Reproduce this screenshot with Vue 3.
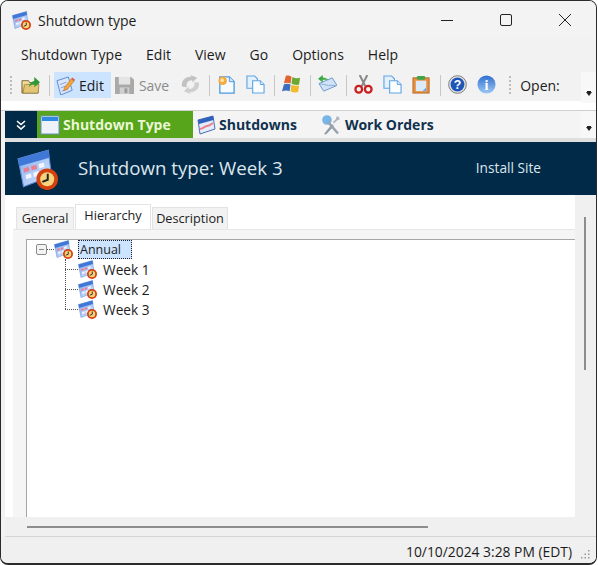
<template>
  <div class="window">
    <svg class="defs" width="0" height="0">
      <defs>
        <linearGradient id="calFill" x1="0" y1="0" x2="1" y2="1">
          <stop offset="0" stop-color="#7fa9ec" />
          <stop offset="1" stop-color="#dbe8ff" />
        </linearGradient>
        <linearGradient id="orb" x1="0" y1="0" x2="0" y2="1">
          <stop offset="0" stop-color="#2f6fd0" />
          <stop offset="1" stop-color="#9cc8f4" />
        </linearGradient>
        <linearGradient id="folderFill" x1="0" y1="0" x2="0" y2="1">
          <stop offset="0" stop-color="#f7e6a8" />
          <stop offset="1" stop-color="#c9a04c" />
        </linearGradient>
        <symbol id="shutdown" viewBox="0 0 38 38">
          <path d="M1 9 29 1l3 24L6 35z" fill="url(#calFill)" stroke="#5f8ad0" />
          <path d="M1 9 29 1l1 7L2 16z" fill="#3f78d6" />
          <path d="M6 18l5-1.500.6 4-5 1.500zM13 16l5-1.500.6 4-5 1.500z" fill="#ea7f92" />
          <path d="M20 14l5-1.500.6 4-5 1.500zM8 24l5-1.500.6 4-5 1.500zM15 22l5-1.500.6 4-5 1.500z" fill="#f1f6ff" />
          <circle cx="28" cy="28" r="10" fill="#d4410f" />
          <circle cx="28" cy="28" r="6.500" fill="#f5d27c" />
          <path d="M28.500 23v5.500l-5 2" fill="none" stroke="#222" stroke-width="1.800" />
        </symbol>
        <symbol id="folder" viewBox="0 0 20 20">
          <path d="M1 6h7l1 2h9v11H1z" fill="url(#folderFill)" stroke="#7b6430" />
          <path d="M2 19 4 10h15l-1 9z" fill="#e3c573" stroke="#8c7236" stroke-width=".6" />
          <path d="M8 13c1-4 3-6 6-7V2l6 5.500-6 5.500V9.500c-2 0-4 1.500-6 3.500z" fill="#2c9a35" />
        </symbol>
        <symbol id="edit" viewBox="0 0 20 20">
          <path d="M1 5 13 1l4 14-12 5z" fill="#dbe6fa" stroke="#5e87c8" />
          <path d="M4 9l7-2.500M5 12.500l7-2.500M6 16l7-2.500" stroke="#7fa2dc" fill="none" />
          <path d="M9 12 16 3l3 2.500-7 8.500-4 1.500z" fill="#f0a63a" stroke="#b9722a" stroke-width=".6" />
          <path d="M16 3l1.200-1.500 3 2.500L19 5.500z" fill="#e2574a" />
        </symbol>
        <symbol id="save" viewBox="0 0 20 20">
          <path d="M0 1h17l3 3v15H0z" fill="#a9a9a9" />
          <rect x="4" y="1" width="12" height="8" fill="#e4e4e4" />
          <rect x="5" y="12" width="10" height="7" fill="#cfcfcf" />
          <rect x="10" y="13" width="3" height="5" fill="#9a9a9a" />
        </symbol>
        <symbol id="refresh" viewBox="0 0 20 20">
          <path d="M1 12C0 6 5 1 11 2L10 0l7 3-5 5V5.500C8 5 5 8 6 13z" fill="#c2c2c2" />
          <path d="M19 8c1 6-4 11-10 10l1 2-7-3 5-5v2.500c4 .5 7-2.500 6-7z" fill="#cfcfcf" />
        </symbol>
        <symbol id="newdoc" viewBox="0 0 20 20">
          <path d="M3 2h10l5 5v12H3z" fill="#f6fbff" stroke="#4b9be0" stroke-width="1.400" />
          <path d="M13 2v5h5" fill="#d3e8fb" stroke="#4b9be0" />
          <circle cx="6" cy="6" r="4.500" fill="#f6a93c" />
          <circle cx="5.500" cy="5.500" r="2" fill="#ffe3a6" />
        </symbol>
        <symbol id="copy" viewBox="0 0 20 20">
          <path d="M1 1h8l3 3v10H1z" fill="#e4f1fd" stroke="#5ea5e4" stroke-width="1.200" />
          <path d="M7 6h8l4 4v9H7z" fill="#fbfdff" stroke="#5ea5e4" stroke-width="1.200" />
          <path d="M15 6v4h4" fill="#d3e8fb" stroke="#5ea5e4" />
        </symbol>
        <symbol id="flag" viewBox="0 0 20 20">
          <path d="M4 1C6 0 9 1 10 2L9 9C7 8 4 8 2 9z" fill="#e3622e" />
          <path d="M11 2c2 1 5 2 8 1l-1 7c-3 1-6 0-8-1z" fill="#69a92f" />
          <path d="M2 10c2-1 5-1 7 0l-1 7c-2-1-5-1-8 0z" fill="#3a6fc0" />
          <path d="M10 10c2 1 5 2 8 1l-1 7c-3 1-6 0-8-1z" fill="#efbb2d" />
        </symbol>
        <symbol id="mail" viewBox="0 0 20 20">
          <path d="M1 9 15 3l5 8-14 6z" fill="#cfe2f7" stroke="#6f97c6" />
          <path d="M1 9l10 2 9 0" fill="none" stroke="#8aaed6" />
          <path d="M0 4l5-4v2.500c2 0 5 1 6 3-2-1-4-.5-6-.5v3z" fill="#39a845" />
        </symbol>
        <symbol id="scissors" viewBox="0 0 20 20">
          <path d="M6 0l6 12M14 0 8 12" stroke="#8a8a8a" stroke-width="2.200" fill="none" />
          <circle cx="5" cy="15" r="3.500" fill="none" stroke="#cb1f1f" stroke-width="2.400" />
          <circle cx="15" cy="15" r="3.500" fill="none" stroke="#cb1f1f" stroke-width="2.400" />
        </symbol>
        <symbol id="paste" viewBox="0 0 20 20">
          <rect x="1" y="3" width="17" height="16" fill="#e98f3c" stroke="#b86a2a" />
          <rect x="4" y="6" width="11" height="11" fill="#dcebfb" />
          <path d="M11 17h4v-4z" fill="#6fa9e6" />
          <rect x="5" y="1" width="9" height="4" rx="1.500" fill="#3fa548" />
        </symbol>
        <symbol id="helpOrb" viewBox="0 0 20 20">
          <circle cx="10" cy="10" r="9.300" fill="#e4e4e4" stroke="#777" />
          <circle cx="10" cy="10" r="7.300" fill="#1d55b8" />
          <text x="10" y="14.700" text-anchor="middle" font-family="Liberation Sans" font-weight="700" font-size="13" fill="#fff">?</text>
        </symbol>
        <symbol id="infoOrb" viewBox="0 0 20 20">
          <circle cx="10" cy="10" r="9.500" fill="url(#orb)" />
          <text x="10" y="15.500" text-anchor="middle" font-family="Liberation Serif" font-weight="700" font-size="15" fill="#fff">i</text>
        </symbol>
        <symbol id="pane" viewBox="0 0 20 20">
          <rect x="1" y="1" width="18" height="18" fill="#eef3fb" stroke="#6d90b8" />
          <rect x="2" y="2" width="16" height="4" fill="#2f8ae0" />
        </symbol>
        <symbol id="shutdowns" viewBox="0 0 20 20">
          <path d="M2 5 17 1l2 13-15 5z" fill="#e3ecfb" stroke="#4a6fb5" />
          <path d="M2 5 17 1l.6 4L3 9z" fill="#2f60bd" />
          <path d="M4 14c4-1 5-3 7-3s3-1 6-3" fill="none" stroke="#ef7f89" stroke-width="2" />
        </symbol>
        <symbol id="tools" viewBox="0 0 20 20">
          <path d="M3 19 11 9l2 2-8 8.500z" fill="#8f9aa5" />
          <circle cx="6" cy="5" r="4.800" fill="#79b4e6" />
          <path d="M7 7l10 11.500" stroke="#9aa3ab" stroke-width="2.600" />
          <path d="M12 7l3-3 .5-2.500c2-.5 3.500 1 3 3l-2.500 1-3 3z" fill="#aeb5bc" />
        </symbol>
      </defs>
    </svg>

    <header class="titlebar">
      <svg class="title-icon"><use href="#shutdown" /></svg>
      <span class="title-text">Shutdown type</span>
      <div class="win-controls">
        <span class="ctl-min"></span>
        <span class="ctl-max"></span>
        <svg class="ctl-close" viewBox="0 0 12 12"><path d="M0 0l12 12M12 0 0 12" stroke="#222" stroke-width="1" /></svg>
      </div>
    </header>

    <nav class="menubar">
      <span v-for="m in menus" :key="m">{{ m }}</span>
    </nav>

    <div class="toolbar">
      <span class="grip"></span>
      <svg class="tb-icon folder"><use href="#folder" /></svg>
      <span class="sep"></span>
      <button class="tb-btn active"><svg class="tb-icon"><use href="#edit" /></svg>Edit</button>
      <button class="tb-btn muted"><svg class="tb-icon"><use href="#save" /></svg>Save</button>
      <svg class="tb-icon refresh"><use href="#refresh" /></svg>
      <span class="sep"></span>
      <div class="tb-group">
        <svg class="tb-icon"><use href="#newdoc" /></svg>
        <svg class="tb-icon"><use href="#copy" /></svg>
      </div>
      <span class="sep"></span>
      <svg class="tb-icon"><use href="#flag" /></svg>
      <span class="sep"></span>
      <svg class="tb-icon"><use href="#mail" /></svg>
      <span class="sep"></span>
      <div class="tb-group">
        <svg class="tb-icon"><use href="#scissors" /></svg>
        <svg class="tb-icon"><use href="#copy" /></svg>
        <svg class="tb-icon"><use href="#paste" /></svg>
      </div>
      <span class="sep"></span>
      <div class="tb-group">
        <svg class="tb-icon"><use href="#helpOrb" /></svg>
        <svg class="tb-icon"><use href="#infoOrb" /></svg>
      </div>
      <span class="grip second"></span>
      <span class="open-label">Open:</span>
      <span class="overflow"><i></i></span>
    </div>

    <div class="nav-gap"></div>

    <div class="navbar">
      <span class="collapse">
        <svg viewBox="0 0 10 10" width="10" height="10"><path d="M1 1l4 3.500L9 1M1 5.500 5 9l4-3.500" fill="none" stroke="#fff" stroke-width="1.600" /></svg>
      </span>
      <span class="nav-item current"><svg class="nav-icon"><use href="#pane" /></svg>Shutdown Type</span>
      <span class="nav-item second"><svg class="nav-icon"><use href="#shutdowns" /></svg>Shutdowns</span>
      <span class="nav-item third"><svg class="nav-icon"><use href="#tools" /></svg>Work Orders</span>
      <span class="overflow"><i></i></span>
    </div>

    <section class="banner">
      <svg class="banner-icon"><use href="#shutdown" /></svg>
      <h1>Shutdown type: Week 3</h1>
      <span class="site">Install Site</span>
    </section>

    <div class="body">
      <div class="sheet">
        <div class="tabs">
          <span class="tab general">General</span>
          <span class="tab selected">Hierarchy</span>
          <span class="tab description">Description</span>
        </div>
        <div class="panel">
          <div class="tree">
            <div class="node root">
              <span class="expander"></span>
              <span class="dash"></span>
              <svg class="node-icon"><use href="#shutdown" /></svg>
              <span class="node-label">Annual</span>
            </div>
            <div class="children">
              <div v-for="w in weeks" :key="w" class="node">
                <span class="link"></span>
                <svg class="node-icon"><use href="#shutdown" /></svg>
                <span class="week">{{ w }}</span>
              </div>
            </div>
          </div>
        </div>
      </div>
      <div class="vscroll"><span></span></div>
    </div>

    <div class="hscroll"><span></span></div>

    <footer class="status">
      <span>10/10/2024 3:28 PM (EDT)</span>
      <svg class="resize" viewBox="0 0 10 10"><path d="M8 1h1.500v1.500H8zM8 4.500h1.500V6H8zM8 8h1.500v1.500H8zM4.500 4.500H6V6H4.500zM4.500 8H6v1.500H4.500zM1 8h1.500v1.500H1z" fill="#9a9a9a" /></svg>
    </footer>
  </div>
</template>

<script setup>
const menus = ['Shutdown Type', 'Edit', 'View', 'Go', 'Options', 'Help'];
const weeks = ['Week 1', 'Week 2', 'Week 3'];
</script>

<style>
html,
body {
  margin: 0;
  background: #fff;
}
</style>

<style scoped>
.window {
  box-sizing: border-box;
  width: 597px;
  height: 565px;
  display: flex;
  flex-direction: column;
  overflow: hidden;
  border: 1px solid #2b2b2b;
  border-bottom-width: 2px;
  border-radius: 8px;
  background: #f2f2f2;
  font-family: "Open Sans", "Noto Sans", sans-serif;
  font-size: 14px;
  color: #1c1c1c;
}

.defs {
  position: absolute;
}

.titlebar {
  flex: none;
  box-sizing: border-box;
  height: 37px;
  display: flex;
  align-items: center;
  padding: 1px 0 0 11px;
  background: #f3f3f3;
}

.title-icon {
  width: 19px;
  height: 19px;
  margin-right: 7px;
}

.title-text {
  font-size: 14px;
}

.win-controls {
  margin-left: auto;
  display: flex;
  align-items: center;
  margin-right: 25px;
}

.ctl-min {
  width: 12px;
  height: 1px;
  background: #222;
  margin-right: 47px;
}

.ctl-max {
  width: 10px;
  height: 10px;
  border: 1px solid #222;
  border-radius: 2px;
  margin-right: 47px;
}

.ctl-close {
  width: 12px;
  height: 12px;
}

.menubar {
  flex: none;
  box-sizing: border-box;
  height: 34px;
  display: flex;
  align-items: center;
  gap: 24px;
  padding: 0 0 2px 20px;
}

.toolbar {
  flex: none;
  height: 31px;
  display: flex;
  align-items: center;
  padding-left: 9px;
  background: linear-gradient(#f2f2f2 29px, #fff 29px);
  position: relative;
}

.grip {
  width: 2px;
  height: 18px;
  margin: 0 9px 6px 0;
  background: repeating-linear-gradient(#bdbdbd 0 2px, transparent 2px 4px);
}

.grip.second {
  margin-left: 13px;
  margin-right: 0;
}

.tb-icon {
  width: 19px;
  height: 19px;
  flex: none;
  margin-bottom: 6px;
}

.tb-group {
  display: flex;
  gap: 10px;
}

.sep {
  width: 1px;
  height: 21px;
  margin: 0 7px 5px 9px;
  background: #c8c8c8;
}

.tb-btn {
  height: 26px;
  display: flex;
  align-items: center;
  gap: 4px;
  margin: 0 0 5px;
  padding: 0 7px 0 2px;
  border: 0;
  font: inherit;
  background: transparent;
  color: inherit;
}

.tb-btn .tb-icon {
  margin: 0;
}

.tb-btn.active {
  margin-left: -3px;
  background: #cce4ff;
}

.tb-btn.muted {
  margin-left: 2px;
  gap: 5px;
  color: #8b8b8b;
  padding-right: 12px;
}

.open-label {
  margin: 0 0 5px 9px;
}

.overflow {
  width: 15px;
  align-self: stretch;
  margin-left: auto;
  position: relative;
  background: #f8f8f8;
}

.overflow i {
  position: absolute;
  left: 5px;
  bottom: 7px;
  width: 0;
  height: 0;
  border: 3px solid transparent;
  border-top: 4px solid #222;
  border-bottom: 0;
  box-shadow: 0 -2px 0 -1px #222;
}

.nav-gap {
  flex: none;
  height: 7px;
  background: #fff;
  border-bottom: 1px solid #cfcfcf;
}

.navbar {
  flex: none;
  height: 27px;
  display: flex;
  align-items: stretch;
  margin-left: 4px;
  background: #f4f4f4;
  font-weight: 700;
  color: #10324f;
  border-bottom: 4px solid #dfdfdf;
}

.collapse {
  width: 32px;
  display: flex;
  align-items: center;
  justify-content: center;
  background: #002a47;
}

.nav-item {
  display: flex;
  align-items: center;
  gap: 3px;
}

.nav-item.current {
  width: 153px;
  padding-left: 3px;
  background: #56a51a;
  color: #eaf7d6;
}

.nav-item.second {
  margin-left: 3px;
}

.nav-item.third {
  margin-left: 24px;
  gap: 4px;
}

.nav-icon {
  width: 20px;
  height: 20px;
}

.banner {
  flex: none;
  box-sizing: border-box;
  height: 53px;
  margin-left: 4px;
  display: flex;
  align-items: center;
  padding: 0 55px 3px 12px;
  background: #002a47;
  color: #dce6ee;
}

.banner-icon {
  width: 41px;
  height: 41px;
  margin-top: 4px;
}

.banner h1 {
  margin: 0 0 0 20px;
  font-size: 18.700px;
  font-weight: 400;
}

.site {
  margin-left: auto;
  font-size: 13.700px;
}

.body {
  flex: 1;
  min-height: 0;
  display: flex;
  margin-left: 4px;
}

.sheet {
  flex: 1;
  display: flex;
  flex-direction: column;
  background: #fff;
  padding-top: 9px;
}

.tabs {
  flex: none;
  display: flex;
  align-items: flex-end;
  height: 25px;
  padding-left: 11px;
  font-size: 12.700px;
}

.tab {
  height: 22px;
  line-height: 21px;
  text-align: center;
  background: #f2f2f2;
  border: 1px solid #e3e3e3;
  border-bottom: 0;
  box-sizing: border-box;
}

.tab.general {
  width: 58px;
  margin-right: 1px;
}

.tab.selected {
  width: 76px;
  height: 25px;
  line-height: 20px;
  background: #fff;
  margin-right: 1px;
}

.tab.description {
  width: 76px;
}

.panel {
  flex: 1;
  min-height: 0;
  margin-left: 8px;
  padding: 9px 0 0 13px;
  background: #f5f5f5;
  border-top: 1px solid #e6e6e6;
  display: flex;
}

.tree {
  flex: 1;
  background: #fff;
  border-top: 1px solid #a5a5a5;
  border-left: 1px solid #a5a5a5;
}

.node {
  height: 20px;
  display: flex;
  align-items: center;
}

.root {
  height: 19px;
  padding-left: 9px;
}

.expander {
  box-sizing: border-box;
  width: 11px;
  height: 11px;
  border: 1px solid #8a8a8a;
  border-radius: 2px;
  background: linear-gradient(#8a8a8a, #8a8a8a) center / 5px 1px no-repeat #f3f3f3;
}

.dash {
  width: 7px;
  border-top: 1px dotted #555;
}

.node-icon {
  width: 19px;
  height: 19px;
  flex: none;
}

.node-label {
  box-sizing: border-box;
  height: 19px;
  line-height: 17px;
  margin-left: 5px;
  padding: 0 1px;
  width: 54px;
  background: #cce4ff;
  border: 1px dotted #222;
  font-size: 12.500px;
}

.children {
  position: relative;
  padding-left: 38px;
}

.children::before {
  content: "";
  position: absolute;
  left: 38px;
  top: 0;
  height: 50px;
  border-left: 1px dotted #555;
}

.link {
  width: 13px;
  border-top: 1px dotted #555;
}

.week {
  margin-left: 6px;
  font-size: 13.700px;
}

.vscroll {
  flex: none;
  width: 21px;
  background: #f0f0f0;
}

.vscroll span {
  display: block;
  width: 2px;
  height: 153px;
  margin: 22px 0 0 9px;
  background: #8d8d8d;
}

.hscroll {
  flex: none;
  height: 10px;
  margin-left: 4px;
  background: #f0f0f0;
  border-bottom: 1px solid #d5d5d5;
  padding: 9px 0 0 22px;
}

.hscroll span {
  display: block;
  width: 401px;
  height: 2px;
  background: #8d8d8d;
}

.status {
  flex: none;
  height: 26px;
  display: flex;
  align-items: center;
  justify-content: flex-end;
  gap: 8px;
  padding: 2px 6px 0 0;
  box-sizing: border-box;
  background: #f0f0f0;
  font-size: 13.850px;
}

.resize {
  width: 10px;
  height: 10px;
  align-self: flex-end;
  margin-bottom: 4px;
}
</style>
